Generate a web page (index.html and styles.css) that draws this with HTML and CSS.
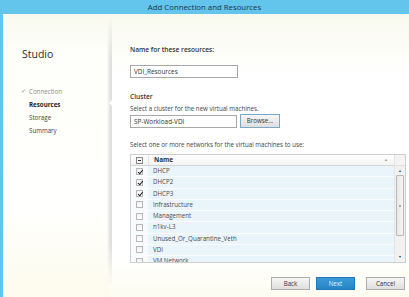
FILE: index.html
```html
<!DOCTYPE html>
<html>
<head>
<meta charset="utf-8">
<link rel="stylesheet" href="styles.css">
</head>
<body>
<div class="titlebar">Add Connection and Resources</div>
<div class="window">
  <div class="sidebar">
    <div class="brand">Studio</div>
    <ul class="steps">
      <li class="done"><span class="tick">✓</span>Connection</li>
      <li class="current">Resources</li>
      <li>Storage</li>
      <li>Summary</li>
    </ul>
  </div>
  <div class="divider"><span class="notch"></span></div>
  <div class="main">
    <div class="label first">Name for these resources:</div>
    <div class="input name-input">VDI_Resources</div>
    <div class="label cluster">Cluster</div>
    <div class="hint">Select a cluster for the new virtual machines.</div>
    <div class="cluster-row">
      <div class="input cluster-input">SP-Workload-VDI</div>
      <div class="btn browse">Browse...</div>
    </div>
    <div class="hint networks">Select one or more networks for the virtual machines to use:</div>
    <div class="grid">
      <div class="grid-body">
        <div class="head">
          <div class="ccol"><span class="cb minus"></span></div>
          <div class="ncol">Name<span class="sort">▲</span></div>
        </div>
        <div class="rows">
          <div class="row"><div class="ccol"><span class="cb on"></span></div><div class="ncol">DHCP</div></div>
          <div class="row"><div class="ccol"><span class="cb on"></span></div><div class="ncol">DHCP2</div></div>
          <div class="row"><div class="ccol"><span class="cb on"></span></div><div class="ncol">DHCP3</div></div>
          <div class="row"><div class="ccol"><span class="cb"></span></div><div class="ncol">Infrastructure</div></div>
          <div class="row"><div class="ccol"><span class="cb"></span></div><div class="ncol">Management</div></div>
          <div class="row"><div class="ccol"><span class="cb"></span></div><div class="ncol">n1kv-L3</div></div>
          <div class="row"><div class="ccol"><span class="cb"></span></div><div class="ncol">Unused_Or_Quarantine_Veth</div></div>
          <div class="row"><div class="ccol"><span class="cb"></span></div><div class="ncol">VDI</div></div>
          <div class="row"><div class="ccol"><span class="cb"></span></div><div class="ncol">VM Network</div></div>
        </div>
      </div>
      <div class="scroll">
        <div class="scroll-head"></div>
        <div class="track">
          <span class="arrow up">▲</span>
          <div class="thumb"><span class="grip"></span></div>
          <span class="arrow down">▼</span>
        </div>
      </div>
    </div>
    <div class="actions">
      <div class="btn">Back</div>
      <div class="btn primary">Next</div>
      <div class="btn cancel">Cancel</div>
    </div>
  </div>
</div>
</body>
</html>
```
FILE: styles.css
```css
* { box-sizing: border-box; margin: 0; padding: 0; }
html, body { width: 409px; height: 297px; overflow: hidden; }
body {
  font-family: "Open Sans", "Noto Sans", "Liberation Sans", sans-serif;
  background: #fbfbf2;
  color: #333;
}
.titlebar {
  height: 14px;
  background: #63c4ec;
  color: #17344a;
  font-size: 7.8px;
  line-height: 14px;
  text-align: center;
}
.window {
  display: flex;
  height: 283px;
  border-left: 3px solid #63c4ec;
  background: linear-gradient(to bottom, #f8f9ee 0, #fcfcf6 30px, #fff 60px, #fff 240px, #fdfcf1 283px);
}
.sidebar {
  width: 104px;
  padding: 32px 0 0 19px;
  background: linear-gradient(to bottom, #f8f9ee 0, #fefefb 40px, #fffffd 200px, #fdfbec 283px);
}
.brand {
  font-size: 10.5px;
  color: #2a2a2a;
  line-height: 16px;
  margin-bottom: 23px;
}
.steps { list-style: none; }
.steps li {
  font-size: 6.2px;
  line-height: 13px;
  color: #444;
  padding-left: 7px;
  position: relative;
}
.steps li.done { color: #8a8a8a; }
.steps li.current { color: #1a1a1a; font-weight: 700; }
.tick {
  position: absolute;
  left: -1px;
  top: 0;
  font-size: 6px;
  color: #8a8a8a;
}
.divider {
  width: 5px;
  position: relative;
  background:
    linear-gradient(to bottom, #fafaf2 0, rgba(255,255,255,0) 45px, rgba(255,255,255,0) 230px, #fdfcf3 270px),
    linear-gradient(to right, #fbfbfa 0, #e4e4e4 60%, #d6d6d6 80%, #ededed 100%);
}
.notch {
  position: absolute;
  right: 0;
  top: 86px;
  width: 0;
  height: 0;
  border-top: 3px solid transparent;
  border-bottom: 3px solid transparent;
  border-right: 3px solid #fff;
}
.main {
  flex: 1;
  padding: 31px 3px 0 18px;
  display: flex;
  flex-direction: column;
}
.label {
  font-size: 6.6px;
  font-weight: 600;
  color: #333;
  line-height: 10px;
}
.hint {
  font-size: 6.2px;
  color: #444;
  line-height: 10px;
}
.input {
  border: 1px solid #a8a8a8;
  background: #fff;
  font-size: 6.4px;
  color: #333;
  height: 13px;
  line-height: 11px;
  padding-left: 3px;
}
.name-input { width: 108px; margin-top: 10px; }
.cluster { margin-top: 14px; }
.hint { margin-top: 2px; }
.cluster-row { display: flex; gap: 3px; margin-top: 1px; }
.cluster-input { width: 107px; }
.btn {
  height: 13px;
  border: 1px solid #acacac;
  background: linear-gradient(to bottom, #f6f6f6, #dedede);
  font-size: 6.2px;
  line-height: 11px;
  text-align: center;
  color: #333;
  width: 39px;
}
.browse { width: 40px; margin-top: -1px; height: 14px; border-color: #7aa7c7; }
.networks { margin-top: 12px; }
.grid {
  display: flex;
  width: 276px;
  height: 109px;
  margin-top: 4px;
  border: 1px solid #cfcfcf;
  background: #fff;
  overflow: hidden;
}
.grid-body { flex: 1; display: flex; flex-direction: column; overflow: hidden; }
.head {
  display: flex;
  height: 11px;
  flex: none;
  border-bottom: 1px solid #d5d5d5;
  background: linear-gradient(to bottom, #fff, #f3f3f3);
}
.head .ncol {
  font-size: 6.4px;
  font-weight: 700;
  color: #333;
  line-height: 10px;
  position: relative;
  border-left: 1px solid #e2e2e2;
}
.sort {
  position: absolute;
  right: 6px;
  top: 0;
  font-size: 4px;
  color: #999;
  font-weight: 400;
}
.ccol {
  width: 17px;
  flex: none;
  display: flex;
  align-items: center;
  justify-content: center;
}
.ncol {
  flex: 1;
  padding-left: 5px;
}
.row {
  display: flex;
  height: 11.25px;
  border-bottom: 1px solid #fbfdff;
}
.row .ccol { background: #f7fbfd; }
.row .ncol {
  background: #eaf5fb;
  font-size: 6.2px;
  color: #4a4a4a;
  line-height: 10.25px;
}
.cb {
  width: 7px;
  height: 7px;
  border: 1px solid #b8b8b8;
  background: linear-gradient(to bottom, #f2f2f2, #fff);
  position: relative;
  display: block;
}
.cb.on::after {
  content: "";
  position: absolute;
  left: 1.5px;
  top: 0px;
  width: 2px;
  height: 3.5px;
  border-right: 1.4px solid #1a1a1a;
  border-bottom: 1.4px solid #1a1a1a;
  transform: rotate(40deg);
}
.cb.minus { border-color: #888; }
.cb.minus::after {
  content: "";
  position: absolute;
  left: 1px;
  top: 2px;
  width: 3px;
  height: 1px;
  background: #333;
}
.scroll {
  width: 11px;
  flex: none;
  display: flex;
  flex-direction: column;
  background: #f1f1f1;
  border-left: 1px solid #e4e4e4;
}
.scroll-head { height: 11px; flex: none; background: #f3f3f3; border-bottom: 1px solid #e0e0e0; }
.track {
  flex: 1;
  display: flex;
  flex-direction: column;
  align-items: center;
  padding: 1px 1px;
}
.arrow { font-size: 3.5px; color: #444; line-height: 8px; height: 8px; }
.thumb {
  width: 8px;
  height: 61px;
  border: 1px solid #b9b9b9;
  border-radius: 1px;
  background: linear-gradient(to right, #e8e8e8, #f5f5f5);
  display: flex;
  align-items: center;
  justify-content: center;
}
.grip { width: 2px; height: 2px; background: #aaa; }
.track .down { margin-top: auto; }
.actions {
  display: flex;
  justify-content: flex-end;
  gap: 6px;
  margin-top: 14px;
  padding-right: 1px;
}
.actions .btn { width: 39px; }
.actions .cancel { margin-left: 5px; }
.btn.primary {
  background: linear-gradient(to bottom, #3a9ad8, #2783c6);
  border-color: #2478b5;
  color: #e8f3fb;
}
```
